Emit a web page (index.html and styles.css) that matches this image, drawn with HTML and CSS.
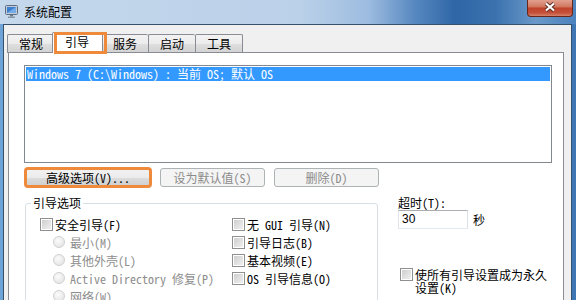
FILE: index.html
```html
<!DOCTYPE html>
<html lang="zh-CN">
<head>
    <meta charset="UTF-8">
    <title>系统配置</title>
    <link rel="stylesheet" href="styles.css">
</head>
<body>
    <div class="window">
        <div class="titlebar">
            <svg class="app-icon" viewBox="0 0 13 13" width="13" height="13">
                <rect x="0.5" y="0.5" width="12" height="9" rx="1" fill="#c3ccd6" stroke="#5d6d80"/>
                <rect x="2" y="2" width="9" height="6" fill="#3d7fcf"/>
                <path d="M2 8 L11 2 L11 8 Z" fill="#74ace8"/>
                <rect x="5" y="10" width="3" height="1.5" fill="#6d7b8b"/>
                <rect x="3" y="11.5" width="7" height="1.5" fill="#8b97a5"/>
            </svg>
            <span class="title">系统配置</span>
            <div class="close">
                <svg width="14" height="10" viewBox="0 0 14 10">
                    <path d="M3 1.5 L11 8.5 M11 1.5 L3 8.5" stroke="#5a2a20" stroke-width="4"/>
                    <path d="M3 1.5 L11 8.5 M11 1.5 L3 8.5" stroke="#fff" stroke-width="2.2"/>
                </svg>
            </div>
        </div>

        <div class="client">
            <div class="tabs">
                <div class="tab">常规</div>
                <div class="tab active">引导<span class="tab-mark"></span></div>
                <div class="tab">服务</div>
                <div class="tab">启动</div>
                <div class="tab">工具</div>
            </div>

            <div class="panel">
                <div class="listbox">
                    <div class="item selected">Windows 7 (C:\Windows) : 当前 OS; 默认 OS</div>
                </div>

                <div class="buttons">
                    <button class="btn wide mark">高级选项(V)...</button>
                    <button class="btn" disabled>设为默认值(S)</button>
                    <button class="btn" disabled>删除(D)</button>
                </div>

                <div class="lower">
                    <fieldset class="group">
                        <legend>引导选项</legend>
                        <div class="cols">
                            <div class="col left">
                                <div class="opt"><span class="check"></span>安全引导(F)</div>
                                <div class="opt sub"><span class="radio"></span>最小(M)</div>
                                <div class="opt sub"><span class="radio"></span>其他外壳(L)</div>
                                <div class="opt sub"><span class="radio"></span>Active Directory 修复(P)</div>
                                <div class="opt sub"><span class="radio"></span>网络(W)</div>
                            </div>
                            <div class="col">
                                <div class="opt"><span class="check"></span>无 GUI 引导(N)</div>
                                <div class="opt"><span class="check"></span>引导日志(B)</div>
                                <div class="opt"><span class="check"></span>基本视频(E)</div>
                                <div class="opt"><span class="check"></span>OS 引导信息(O)</div>
                            </div>
                        </div>
                    </fieldset>

                    <div class="side">
                        <div class="side-label">超时(T):</div>
                        <div class="spin">
                            <div class="input">30</div>
                            <span class="unit">秒</span>
                        </div>
                        <div class="perm">
                            <span class="check"></span>
                            <span class="perm-text">使所有引导设置成为永久设置(K)</span>
                        </div>
                    </div>
                </div>
            </div>
        </div>
    </div>
</body>
</html>
```

FILE: styles.css
```css
* {
    box-sizing: border-box;
}

html, body {
    margin: 0;
}

body {
    width: 576px;
    height: 300px;
    overflow: hidden;
    font: 12px "Noto Sans Mono CJK SC", "Noto Sans CJK SC", sans-serif;
    color: #000;
}

.window {
    height: 300px;
    display: flex;
    flex-direction: column;
    overflow: hidden;
    background:
        linear-gradient(to right, #c5d8ec 0%, #bbd1e9 52%, #9dbce0 64%, #5788c0 72%, #2e66a6 79%, #3b72ae 86%, #6a98c9 93%, #4c82bd 100%) top / 100% 24px no-repeat,
        linear-gradient(to right, #6ea3d8, #3f77b4);
}

/* title bar */
.titlebar {
    height: 24px;
    flex: none;
    display: flex;
    align-items: center;
    padding-left: 5px;
}

.app-icon {
    margin-right: 6px;
    margin-top: -1px;
}

.title {
    font-family: "Noto Sans CJK SC", sans-serif;
    line-height: 14px;
    margin-top: -1px;
}

.close {
    margin-left: auto;
    margin-right: 3px;
    align-self: flex-start;
    width: 46px;
    height: 17px;
    padding-top: 2px;
    display: flex;
    justify-content: center;
    align-items: flex-start;
    border: 1px solid #6a2618;
    border-top: none;
    border-radius: 0 0 4px 4px;
    background: linear-gradient(#e2a08f, #d27a63 40%, #c0432b 52%, #c5503a 80%, #d4826a);
}

/* client area */
.client {
    flex: 1;
    min-height: 0;
    display: flex;
    flex-direction: column;
    margin: 0 4px 0 3px;
    padding: 8px 7px 0 4px;
    border: 1px solid #37506b;
    border-bottom: none;
    background: #f0f0f0;
}

.tabs {
    display: flex;
    align-items: flex-end;
    height: 20px;
    margin-bottom: -1px;
    margin-left: -1px;
}

.tab {
    height: 19px;
    padding: 0 11px;
    line-height: 17px;
    border: 1px solid #898c95;
    border-right: none;
    border-bottom: none;
    border-radius: 2px 2px 0 0;
    background: linear-gradient(#f3f3f3, #ebebeb 50%, #dedede 51%, #d2d2d2);
}

.tab:last-child {
    border-right: 1px solid #898c95;
}

.tab.active {
    position: relative;
    z-index: 2;
    height: 21px;
    margin: 0 -2px;
    padding: 0 13px 0 12px;
    line-height: 18px;
    border: 1px solid #898c95;
    border-bottom: none;
    background: #fff;
}

.tab-mark {
    position: absolute;
    left: 1px;
    right: -5px;
    top: -1px;
    bottom: -1px;
    border: 3px solid #ef8a3c;
}

.panel {
    position: relative;
    z-index: 1;
    flex: 1;
    min-height: 0;
    overflow: hidden;
    padding: 12px 11px 0 15px;
    border: 1px solid #898c95;
    border-bottom: none;
    background: #fff;
}

.listbox {
    height: 98px;
    padding: 1px;
    border: 1px solid #828790;
    background: #fff;
}

.item {
    height: 14px;
    line-height: 14px;
    padding-left: 1px;
    white-space: pre;
}

.item.selected {
    background: #3399ff;
    color: #fff;
}

.buttons {
    display: flex;
    margin-top: 5px;
    padding-left: 1px;
}

.btn {
    width: 105px;
    height: 19px;
    margin-right: 9px;
    padding: 0;
    font: inherit;
    line-height: 15px;
    color: #000;
    border: 1px solid #707070;
    border-radius: 3px;
    background: linear-gradient(#f2f2f2, #ebebeb 50%, #dddddd 51%, #cfcfcf);
}

.btn.wide {
    width: 126px;
}

.btn:disabled {
    color: #8b8b8b;
    border-color: #adb2b5;
    background: #f4f4f4;
}

.mark {
    outline: 3px solid #ef8a3c;
    outline-offset: -2px;
}

/* lower part */
.lower {
    display: flex;
    align-items: flex-start;
    margin-top: 9px;
}

.group {
    width: 353px;
    height: 120px;
    min-width: 0;
    margin: 0 0 0 1px;
    padding: 5px 0 0 14px;
    border: 1px solid #d5dfe5;
    border-radius: 3px;
}

.group legend {
    padding: 0 2px;
    margin-left: -9px;
    line-height: 14px;
}

.cols {
    display: flex;
}

.col {
    display: flex;
    flex-direction: column;
}

.col.left {
    width: 192px;
}

.opt {
    display: flex;
    align-items: center;
    height: 18px;
    white-space: pre;
}

.opt.sub {
    padding-left: 13px;
    color: #8d8d8d;
}

.check {
    flex: none;
    width: 13px;
    height: 13px;
    margin-right: 2px;
    border: 1px solid #8e8f8f;
    background: linear-gradient(135deg, #cbcbcb, #f3f3f3);
    box-shadow: inset 0 0 0 1px #fff;
}

.radio {
    flex: none;
    width: 12px;
    height: 12px;
    margin-right: 5px;
    border-radius: 50%;
    border: 1px solid #d0d0d0;
    background: radial-gradient(circle at 40% 35%, #fbfbfb, #e0e0e0);
}

.side {
    display: flex;
    flex-direction: column;
    margin-left: 20px;
}

.side-label {
    line-height: 14px;
}

.spin {
    display: flex;
    align-items: center;
}

.input {
    width: 70px;
    height: 19px;
    padding-left: 3px;
    line-height: 17px;
    font-family: "Liberation Sans", sans-serif;
    border: 1px solid #abadb3;
    border-color: #abadb3 #dbdfe6 #e3e9ef #e2e3ea;
    background: #fff;
}

.unit {
    margin-left: 5px;
}

.perm {
    display: flex;
    align-items: flex-start;
    margin-top: 39px;
    padding-left: 2px;
}

.perm-text {
    width: 134px;
    line-height: 13px;
}
```
